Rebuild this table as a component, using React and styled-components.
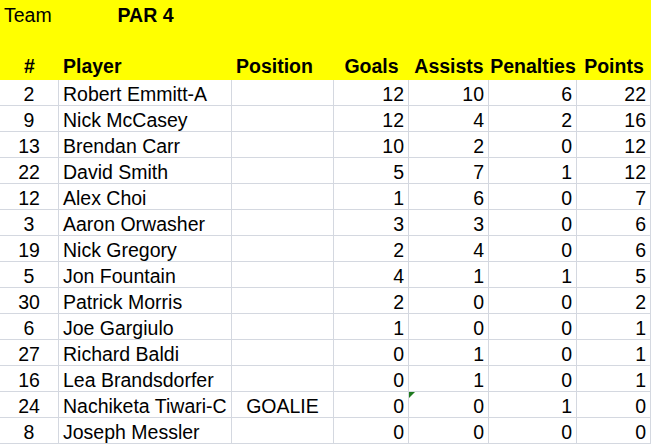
import React from "react";
import styled, { createGlobalStyle } from "styled-components";

const Global = createGlobalStyle`
  html, body { margin: 0; padding: 0; background: #ffffff; }
  body { font-family: "Liberation Sans", Arial, sans-serif; color: #000; }
`;

const COLS = "59px 173px 102px 75px 80px 88px 74px";

const Sheet = styled.div`
  width: 652px;
  height: 448px;
  overflow: hidden;
  background: #fff;
`;

const Banner = styled.div`
  display: grid;
  grid-template-columns: ${COLS};
  grid-template-rows: 26px 27px 27px;
  width: 651px;
  background: #ffff00;
`;

const BannerCell = styled.div`
  display: flex;
  align-items: flex-end;
  justify-content: ${(p) => (p.$align === "center" ? "center" : p.$align === "right" ? "flex-end" : "flex-start")};
  padding: 0 4px ${(p) => (p.$pb ? p.$pb : 0)}px 4px;
  font-size: 19.5px;
  line-height: 22px;
  font-weight: ${(p) => (p.$bold ? 700 : 400)};
  white-space: nowrap;
  grid-column: ${(p) => p.$span || "auto"};
`;

const Body = styled.div`
  display: grid;
  grid-template-columns: ${COLS};
  grid-auto-rows: 26px;
  width: 651px;
`;

const Cell = styled.div`
  position: relative;
  display: flex;
  align-items: flex-end;
  justify-content: ${(p) => (p.$align === "center" ? "center" : p.$align === "right" ? "flex-end" : "flex-start")};
  padding: 0 4px;
  border-right: 1px solid #d4d8e0;
  border-bottom: 1px solid #d4d8e0;
  font-size: 19.5px;
  line-height: 22px;
  white-space: nowrap;
  overflow: visible;
`;

const ErrorFlag = styled.span`
  position: absolute;
  left: 0;
  top: 0;
  width: 0;
  height: 0;
  border-top: 6px solid #1f7a1f;
  border-right: 6px solid transparent;
`;

const players = [
  ["2", "Robert Emmitt-A", "", 12, 10, 6, 22],
  ["9", "Nick McCasey", "", 12, 4, 2, 16],
  ["13", "Brendan Carr", "", 10, 2, 0, 12],
  ["22", "David Smith", "", 5, 7, 1, 12],
  ["12", "Alex Choi", "", 1, 6, 0, 7],
  ["3", "Aaron Orwasher", "", 3, 3, 0, 6],
  ["19", "Nick Gregory", "", 2, 4, 0, 6],
  ["5", "Jon Fountain", "", 4, 1, 1, 5],
  ["30", "Patrick Morris", "", 2, 0, 0, 2],
  ["6", "Joe Gargiulo", "", 1, 0, 0, 1],
  ["27", "Richard Baldi", "", 0, 1, 0, 1],
  ["16", "Lea Brandsdorfer", "", 0, 1, 0, 1],
  ["24", "Nachiketa Tiwari-C", "GOALIE", 0, 0, 1, 0, true],
  ["8", "Joseph Messler", "", 0, 0, 0, 0],
];

export default function App() {
  return (
    <Sheet>
      <Global />
      <Banner>
        <BannerCell>Team</BannerCell>
        <BannerCell $bold $align="center">PAR 4</BannerCell>
        <BannerCell $span="3 / 8" />
        <BannerCell $span="1 / 8" />
        <BannerCell $bold $align="center" $pb={3}>#</BannerCell>
        <BannerCell $bold $pb={3}>Player</BannerCell>
        <BannerCell $bold $pb={3}>Position</BannerCell>
        <BannerCell $bold $align="center" $pb={3}>Goals</BannerCell>
        <BannerCell $bold $align="center" $pb={3}>Assists</BannerCell>
        <BannerCell $bold $align="center" $pb={3}>Penalties</BannerCell>
        <BannerCell $bold $align="center" $pb={3}>Points</BannerCell>
      </Banner>
      <Body>
        {players.map(([num, name, pos, g, a, pen, pts, flag]) => (
          <React.Fragment key={num + name}>
            <Cell $align="center">{num}</Cell>
            <Cell>{name}</Cell>
            <Cell $align="center">{pos}</Cell>
            <Cell $align="right">{g}</Cell>
            <Cell $align="right">
              {flag && <ErrorFlag />}
              {a}
            </Cell>
            <Cell $align="right">{pen}</Cell>
            <Cell $align="right">{pts}</Cell>
          </React.Fragment>
        ))}
      </Body>
    </Sheet>
  );
}
